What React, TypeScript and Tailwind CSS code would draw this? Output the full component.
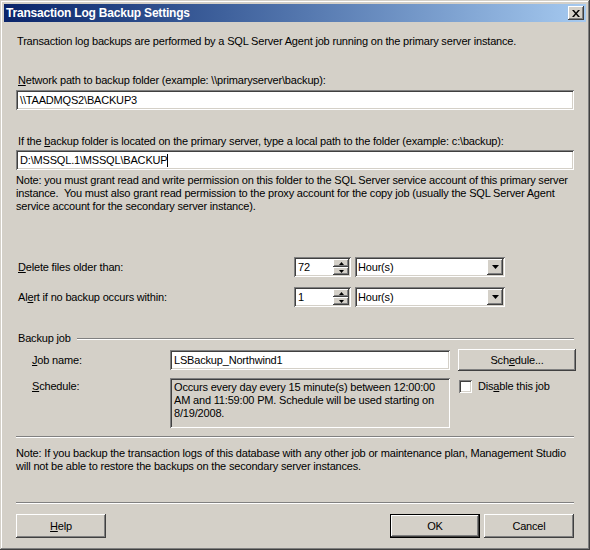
const raised =
  "shadow-[inset_-1px_-1px_#404040,inset_1px_1px_#ffffff,inset_-2px_-2px_#808080,inset_2px_2px_#d4d0c8]";
const sunken =
  "shadow-[inset_1px_1px_#808080,inset_-1px_-1px_#ffffff,inset_2px_2px_#404040,inset_-2px_-2px_#d4d0c8]";

function Etched({ className = "" }: { className?: string }) {
  return (
    <div className={"h-[2px] border-t border-t-[#808080] border-b border-b-white " + className} />
  );
}

function TextBox({ value, caret, className = "" }: { value: string; caret?: boolean; className?: string }) {
  return (
    <div className={"h-[20px] bg-white flex items-center pl-[4px] " + sunken + " " + className}>
      <span>{value}</span>
      {caret && <span className="w-px h-[13px] bg-black" />}
    </div>
  );
}

function Spinner({ value }: { value: string }) {
  return (
    <div className={"w-[57px] h-[20px] bg-white flex items-center justify-between pl-[4px] pr-[2px] " + sunken}>
      <span>{value}</span>
      <div className="flex flex-col w-[16px] h-[16px]">
        <div className={"h-[8px] bg-[#d4d0c8] flex items-center justify-center " + raised}>
          <svg width="5" height="3" viewBox="0 0 5 3">
            <path d="M2.5 0 L5 3 L0 3 Z" fill="#000" />
          </svg>
        </div>
        <div className={"h-[8px] bg-[#d4d0c8] flex items-center justify-center " + raised}>
          <svg width="5" height="3" viewBox="0 0 5 3">
            <path d="M0 0 L5 0 L2.5 3 Z" fill="#000" />
          </svg>
        </div>
      </div>
    </div>
  );
}

function Combo({ value }: { value: string }) {
  return (
    <div className={"w-[150px] h-[20px] bg-white flex items-center justify-between pl-[3px] pr-[2px] " + sunken}>
      <span>{value}</span>
      <div className={"w-[16px] h-[16px] bg-[#d4d0c8] flex items-center justify-center " + raised}>
        <svg width="7" height="4" viewBox="0 0 7 4">
          <path d="M0 0 L7 0 L3.5 4 Z" fill="#000" />
        </svg>
      </div>
    </div>
  );
}

function Button({ children, isDefault }: { children: React.ReactNode; isDefault?: boolean }) {
  if (isDefault) {
    return (
      <div className="w-[90px] h-[24px] border border-black">
        <div className={"w-full h-full bg-[#d4d0c8] flex items-center justify-center " + raised}>{children}</div>
      </div>
    );
  }
  return (
    <div className={"w-[90px] h-[24px] bg-[#d4d0c8] flex items-center justify-center " + raised}>{children}</div>
  );
}

export default function App() {
  return (
    <div
      className={
        "w-[590px] h-[550px] bg-[#d4d0c8] p-[4px] flex flex-col text-[11px] leading-[13px] tracking-[-0.18px] text-black font-['Liberation_Sans',Arial,sans-serif] shadow-[inset_-1px_-1px_#404040,inset_1px_1px_#d4d0c8,inset_-2px_-2px_#808080,inset_2px_2px_#ffffff]"
      }
    >
      {/* title bar */}
      <div className="h-[18px] bg-linear-to-r from-[#0a246a] to-[#a6caf0] flex items-center justify-between pl-[2px] pr-[2px]">
        <span className="font-bold text-white text-[12px] tracking-[-0.2px]">Transaction Log Backup Settings</span>
        <div className={"w-[16px] h-[14px] bg-[#d4d0c8] flex items-center justify-center " + raised}>
          <svg width="8" height="7" viewBox="0 0 8 7">
            <path d="M0 0 L2 0 L4 2.5 L6 0 L8 0 L5 3.5 L8 7 L6 7 L4 4.5 L2 7 L0 7 L3 3.5 Z" fill="#000" />
          </svg>
        </div>
      </div>

      {/* client */}
      <div className="flex-1 flex flex-col px-[12px]">
        <div className="mt-[13px] pl-[1px]">
          Transaction log backups are performed by a SQL Server Agent job running on the primary server instance.
        </div>

        <div className="mt-[26px] pl-[2px]">
          <span className="underline">N</span>etwork path to backup folder (example: \\primaryserver\backup):
        </div>
        <TextBox value="\\TAADMQS2\BACKUP3" className="mt-[3px]" />

        <div className="mt-[25px] pl-[2px]">
          If the <span className="underline">b</span>ackup folder is located on the primary server, type a local path to the folder (example: c:\backup):
        </div>
        <TextBox value="D:\MSSQL.1\MSSQL\BACKUP" caret className="mt-[2px]" />

        <div className="mt-[4px]">
          Note: you must grant read and write permission on this folder to the SQL Server service account of this primary server instance.&nbsp; You must also grant read permission to the proxy account for the copy job (usually the SQL Server Agent service account for the secondary server instance).
        </div>

        <div className="mt-[44px] flex items-center gap-[4px]">
          <div className="w-[274px] pl-[2px]">
            <span className="underline">D</span>elete files older than:
          </div>
          <Spinner value="72" />
          <Combo value="Hour(s)" />
        </div>

        <div className="mt-[10px] flex items-center gap-[4px]">
          <div className="w-[274px] pl-[2px]">
            Al<span className="underline">e</span>rt if no backup occurs within:
          </div>
          <Spinner value="1" />
          <Combo value="Hour(s)" />
        </div>

        <div className="mt-[25px] flex items-center pl-[2px]">
          <span>Backup job</span>
          <div className="flex-1 ml-[6px]">
            <Etched />
          </div>
        </div>

        <div className="mt-[4px] flex items-center">
          <div className="w-[154px] shrink-0 pl-[16px]">
            <span className="underline">J</span>ob name:
          </div>
          <TextBox value="LSBackup_Northwind1" className="w-[280px] shrink-0" />
          <div className="ml-[8px] shrink-0">
            <div className={"w-[118px] h-[22px] bg-[#d4d0c8] flex items-center justify-center " + raised}>
              <span>
                Sch<span className="underline">e</span>dule...
              </span>
            </div>
          </div>
        </div>

        <div className="mt-[7px] flex items-start">
          <div className="w-[154px] shrink-0 pl-[16px] pt-[2px]">
            <span className="underline">S</span>chedule:
          </div>
          <div className={"w-[280px] shrink-0 h-[50px] bg-[#d4d0c8] px-[4px] pt-[3px] " + sunken}>
            Occurs every day every 15 minute(s) between 12:00:00 AM and 11:59:00 PM. Schedule will be used starting on 8/19/2008.
          </div>
          <div className="ml-[9px] mt-[2px] flex items-center">
            <div className={"w-[13px] h-[13px] bg-white " + sunken} />
            <span className="ml-[6px]">
              Dis<span className="underline">a</span>ble this job
            </span>
          </div>
        </div>

        <Etched className="mt-[8px]" />

        <div className="mt-[9px]">
          Note: If you backup the transaction logs of this database with any other job or maintenance plan, Management Studio will not be able to restore the backups on the secondary server instances.
        </div>

        <Etched className="mt-[29px]" />

        <div className="mt-[10px] flex items-center">
          <Button>
            <span>
              <span className="underline">H</span>elp
            </span>
          </Button>
          <div className="flex-1" />
          <Button isDefault>OK</Button>
          <div className="w-[4px]" />
          <Button>Cancel</Button>
        </div>
      </div>
    </div>
  );
}
